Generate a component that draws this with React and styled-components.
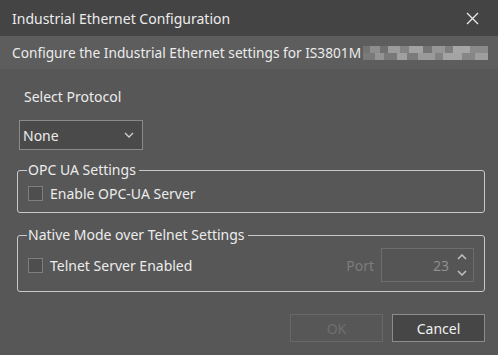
import React from "react";
import styled, { createGlobalStyle } from "styled-components";

const GlobalStyle = createGlobalStyle`
  html, body {
    margin: 0;
    padding: 0;
    background: #575757;
  }
  body {
    font-family: "Noto Sans", "Open Sans", sans-serif;
    color: #ececec;
  }
`;

const Dialog = styled.div`
  width: 498px;
  height: 355px;
  display: flex;
  flex-direction: column;
  background: #575757;
  overflow: hidden;
`;

const TitleBar = styled.div`
  height: 36px;
  flex: none;
  display: flex;
  align-items: center;
  justify-content: space-between;
  padding: 0 19px 0 12px;
  background: #444444;
  font-size: 14px;
`;

const CloseButton = styled.button`
  border: none;
  background: none;
  padding: 0;
  width: 13px;
  height: 13px;
  color: #eaeaea;
  display: flex;
  svg {
    display: block;
  }
`;

const Banner = styled.div`
  height: 33px;
  flex: none;
  display: flex;
  align-items: center;
  padding: 0 0 0 12px;
  background: #5d5d5d;
  font-size: 13.7px;
  white-space: nowrap;
`;

const Redacted = styled.span`
  display: inline-block;
  flex: none;
  width: 125px;
  height: 14px;
  margin-left: 2px;
  background:
    linear-gradient(
      90deg,
      #747474 0 6%,
      #8e8e8e 6% 14%,
      #6f6f6f 14% 20%,
      #9c9c9c 20% 30%,
      #838383 30% 37%,
      #a2a2a2 37% 48%,
      #757575 48% 55%,
      #969696 55% 66%,
      #7e7e7e 66% 72%,
      #a6a6a6 72% 86%,
      #8a8a8a 86% 100%
    ) top / 100% 50% no-repeat,
    linear-gradient(
      90deg,
      #7a7a7a 0 10%,
      #949494 10% 17%,
      #797979 17% 27%,
      #a0a0a0 27% 35%,
      #7b7b7b 35% 44%,
      #9a9a9a 44% 58%,
      #828282 58% 64%,
      #a4a4a4 64% 79%,
      #868686 79% 90%,
      #9e9e9e 90% 100%
    ) bottom / 100% 50% no-repeat;
  filter: blur(0.5px);
`;

const Body = styled.div`
  flex: 1;
  display: flex;
  flex-direction: column;
  padding: 18px 13px 0 17px;
`;

const FieldLabel = styled.div`
  font-size: 14px;
  margin-left: 7px;
  height: 20px;
  line-height: 20px;
`;

const SelectBox = styled.div`
  margin: 13px 0 0 2px;
  width: 124px;
  height: 30px;
  box-sizing: border-box;
  border: 1px solid #8a8a8a;
  background: #4a4a4a;
  display: flex;
  align-items: center;
  justify-content: space-between;
  padding: 0 8px 0 3px;
  font-size: 14px;
`;

const GroupBox = styled.fieldset`
  margin: ${(p) => p.$top}px 0 0 0;
  padding: 5px 10px 9px;
  border: 1.5px solid #c9c9c9;
  border-radius: 3px;
  min-width: 0;
  legend {
    font-size: 14px;
    padding: 0 3px 0 1px;
    margin-left: -1px;
    line-height: 16px;
  }
`;

const Row = styled.div`
  height: ${(p) => p.$height}px;
  display: flex;
  align-items: center;
`;

const CheckLabel = styled.label`
  display: flex;
  align-items: center;
  gap: 7px;
  font-size: 14px;
`;

const Box = styled.span`
  width: 15px;
  height: 15px;
  box-sizing: border-box;
  border: 1px solid #7e7e7e;
  background: #4e4e4e;
`;

const PortLabel = styled.span`
  margin-left: auto;
  margin-right: 7px;
  font-size: 14px;
  color: #7d7d7d;
`;

const SpinBox = styled.div`
  width: 93px;
  height: 34px;
  box-sizing: border-box;
  border: 1px solid #6d6d6d;
  background: #555555;
  display: flex;
  align-items: center;
  justify-content: flex-end;
  font-size: 14px;
  color: #8e8e8e;
  gap: 8px;
  padding-right: 6px;
`;

const Arrows = styled.div`
  display: flex;
  flex-direction: column;
  gap: 10px;
  color: #bdbdbd;
  svg {
    display: block;
  }
`;

const Footer = styled.div`
  display: flex;
  justify-content: flex-end;
  gap: 9px;
  padding: 22px 0 0 0;
`;

const Button = styled.button`
  width: 93px;
  height: 28px;
  box-sizing: border-box;
  font-family: inherit;
  font-size: 14px;
  border: 1px solid ${(p) => (p.disabled ? "#686868" : "#8c8c8c")};
  background: ${(p) => (p.disabled ? "#575757" : "#464646")};
  color: ${(p) => (p.disabled ? "#6f6f6f" : "#f0f0f0")};
`;

const Chevron = ({ up }) => (
  <svg width="10" height="6" viewBox="0 0 10 6">
    <path
      d={up ? "M1 5 L5 1 L9 5" : "M1 1 L5 5 L9 1"}
      fill="none"
      stroke="currentColor"
      strokeWidth="1.6"
    />
  </svg>
);

export default function App() {
  return (
    <>
      <GlobalStyle />
      <Dialog>
        <TitleBar>
          <span>Industrial Ethernet Configuration</span>
          <CloseButton aria-label="Close">
            <svg width="13" height="13" viewBox="0 0 13 13">
              <path d="M1 1 L12 12 M12 1 L1 12" stroke="currentColor" strokeWidth="1.3" />
            </svg>
          </CloseButton>
        </TitleBar>
        <Banner>
          Configure the Industrial Ethernet settings for IS3801M
          <Redacted />
        </Banner>
        <Body>
          <FieldLabel>Select Protocol</FieldLabel>
          <SelectBox>
            <span>None</span>
            <svg width="10" height="6" viewBox="0 0 10 6" style={{ color: "#d0d0d0" }}>
              <path d="M1 1 L5 5 L9 1" fill="none" stroke="currentColor" strokeWidth="1.3" />
            </svg>
          </SelectBox>
          <GroupBox $top={12}>
            <legend>OPC UA Settings</legend>
            <Row $height={20}>
              <CheckLabel>
                <Box />
                Enable OPC-UA Server
              </CheckLabel>
            </Row>
          </GroupBox>
          <GroupBox $top={14}>
            <legend>Native Mode over Telnet Settings</legend>
            <Row $height={34}>
              <CheckLabel>
                <Box />
                Telnet Server Enabled
              </CheckLabel>
              <PortLabel>Port</PortLabel>
              <SpinBox>
                <span>23</span>
                <Arrows>
                  <Chevron up />
                  <Chevron />
                </Arrows>
              </SpinBox>
            </Row>
          </GroupBox>
          <Footer>
            <Button disabled>OK</Button>
            <Button>Cancel</Button>
          </Footer>
        </Body>
      </Dialog>
    </>
  );
}
